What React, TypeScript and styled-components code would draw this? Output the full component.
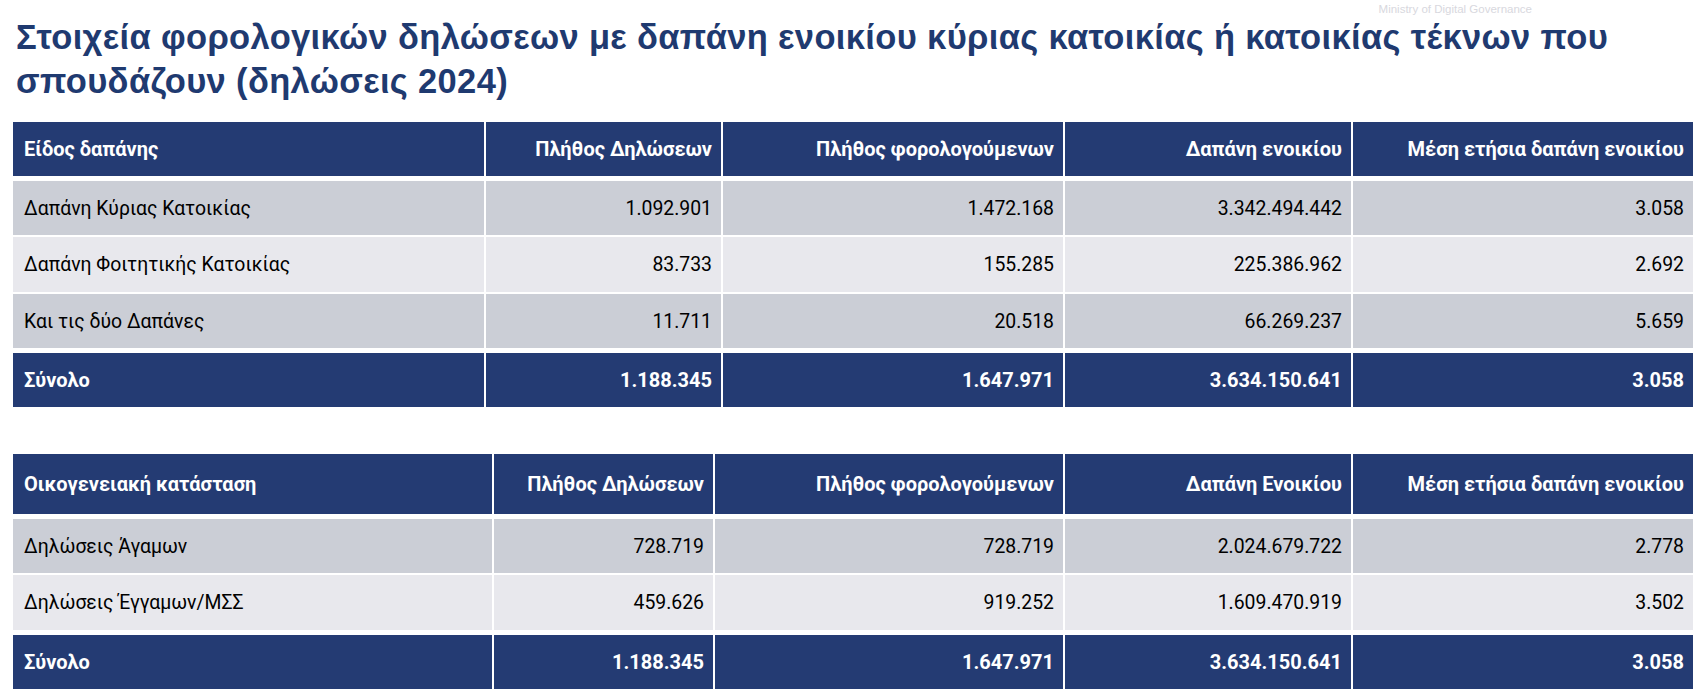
import styled, { createGlobalStyle } from 'styled-components';

const GlobalStyle = createGlobalStyle`
    html, body {
        margin: 0;
        padding: 0;
        background: #ffffff;
    }
    body {
        font-family: Roboto, "Noto Sans", "DejaVu Sans", sans-serif;
    }
`;

const NAVY = '#243b73';
const ROW_DARK = '#cbced6';
const ROW_LIGHT = '#e8e8ed';

interface ITable {
    columns: string; // grid-template-columns
    header: string[];
    rows: string[][];
    total: string[];
    headerHeight: number;
}

const expenseTable: ITable = {
    columns: '471px 235px 340px 286px 340px',
    headerHeight: 54,
    header: ['Είδος δαπάνης', 'Πλήθος Δηλώσεων', 'Πλήθος φορολογούμενων', 'Δαπάνη ενοικίου', 'Μέση ετήσια δαπάνη ενοικίου'],
    rows: [
        ['Δαπάνη Κύριας Κατοικίας', '1.092.901', '1.472.168', '3.342.494.442', '3.058'],
        ['Δαπάνη Φοιτητικής Κατοικίας', '83.733', '155.285', '225.386.962', '2.692'],
        ['Και τις δύο Δαπάνες', '11.711', '20.518', '66.269.237', '5.659'],
    ],
    total: ['Σύνολο', '1.188.345', '1.647.971', '3.634.150.641', '3.058'],
};

const familyTable: ITable = {
    columns: '479px 219px 348px 286px 340px',
    headerHeight: 60,
    header: ['Οικογενειακή κατάσταση', 'Πλήθος Δηλώσεων', 'Πλήθος φορολογούμενων', 'Δαπάνη Ενοικίου', 'Μέση ετήσια δαπάνη ενοικίου'],
    rows: [
        ['Δηλώσεις Άγαμων', '728.719', '728.719', '2.024.679.722', '2.778'],
        ['Δηλώσεις Έγγαμων/ΜΣΣ', '459.626', '919.252', '1.609.470.919', '3.502'],
    ],
    total: ['Σύνολο', '1.188.345', '1.647.971', '3.634.150.641', '3.058'],
};

const DataTable = ({ table }: { table: ITable }) => (
    <Table>
        <Row columns={table.columns} height={table.headerHeight}>
            {table.header.map((h, i) => (
                <HeadCell key={h} alignRight={i > 0}>
                    {h}
                </HeadCell>
            ))}
        </Row>
        <Body>
            {table.rows.map((row, r) => (
                <Row key={row[0]} columns={table.columns} height={r === 1 ? 55 : 54}>
                    {row.map((c, i) => (
                        <Cell key={i} alignRight={i > 0} shade={r % 2 === 0 ? ROW_DARK : ROW_LIGHT}>
                            {c}
                        </Cell>
                    ))}
                </Row>
            ))}
        </Body>
        <Row columns={table.columns} height={54}>
            {table.total.map((c, i) => (
                <HeadCell key={i} alignRight={i > 0}>
                    {c}
                </HeadCell>
            ))}
        </Row>
    </Table>
);

export default function App() {
    return (
        <Page>
            <GlobalStyle />
            <Masthead>
                <Ministry>Ministry of Digital Governance</Ministry>
                <Title>
                    Στοιχεία φορολογικών δηλώσεων με δαπάνη ενοικίου κύριας κατοικίας ή κατοικίας τέκνων που
                    <br />
                    σπουδάζουν (δηλώσεις 2024)
                </Title>
            </Masthead>
            <Tables>
                <DataTable table={expenseTable} />
                <DataTable table={familyTable} />
            </Tables>
        </Page>
    );
}

const Page = styled.main`
    width: 1708px;
    height: 700px;
    box-sizing: border-box;
    padding: 0 15px 0 13px;
    overflow: hidden;
`;

const Masthead = styled.header`
    display: flex;
    flex-direction: column;
`;

const Ministry = styled.div`
    align-self: flex-end;
    margin-right: 161px;
    height: 12px;
    padding-top: 3px;
    font-family: "Liberation Sans", Arial, sans-serif;
    font-size: 11.5px;
    line-height: 12px;
    color: #d8d8de;
`;

const Title = styled.h1`
    margin: 0 0 0 3px;
    font-family: "Liberation Sans", Arial, sans-serif;
    font-size: 34.5px;
    font-weight: 700;
    letter-spacing: 0.35px;
    line-height: 44px;
    color: #1f3a70;
    white-space: nowrap;
`;

const Tables = styled.section`
    display: flex;
    flex-direction: column;
    gap: 47px;
    margin-top: 19px;
`;

const Table = styled.div`
    display: flex;
    flex-direction: column;
    gap: 5px;
`;

const Body = styled.div`
    display: flex;
    flex-direction: column;
    gap: 2px;
`;

const Row = styled.div<{ columns: string; height: number }>`
    display: grid;
    grid-template-columns: ${({ columns }) => columns};
    column-gap: 2px;
    height: ${({ height }) => height}px;
`;

const Cell = styled.div<{ alignRight?: boolean; shade: string }>`
    display: flex;
    align-items: center;
    justify-content: ${({ alignRight }) => (alignRight ? 'flex-end' : 'flex-start')};
    padding: 0 9px 0 11px;
    background: ${({ shade }) => shade};
    color: #000000;
    font-size: 19.4px;
    white-space: nowrap;
`;

const HeadCell = styled.div<{ alignRight?: boolean }>`
    display: flex;
    align-items: center;
    justify-content: ${({ alignRight }) => (alignRight ? 'flex-end' : 'flex-start')};
    padding: 0 9px 0 11px;
    background: ${NAVY};
    color: #ffffff;
    font-size: 20px;
    font-weight: 700;
    white-space: nowrap;
`;
